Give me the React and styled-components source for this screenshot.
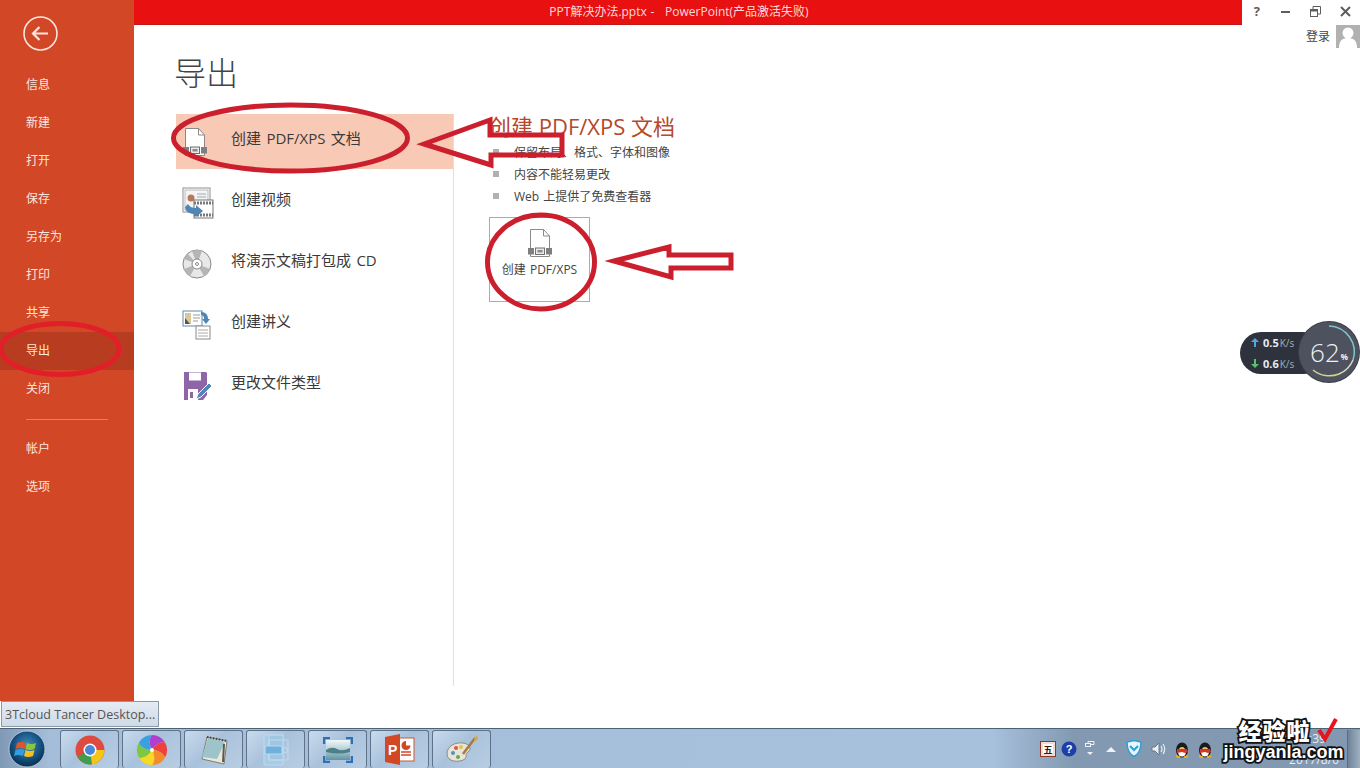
import React from 'react';
import styled, { createGlobalStyle } from 'styled-components';

const Global = createGlobalStyle`
  html, body { margin: 0; padding: 0; background: #fff; }
  body { font-family: "Open Sans", "Noto Sans CJK SC", sans-serif; }
`;

const Page = styled.div`
  position: relative; width: 1360px; height: 768px; overflow: hidden;
  display: flex; flex-direction: column; background: #fff;
`;
const Main = styled.div`flex: 1; display: flex; min-height: 0;`;

const Sidebar = styled.nav`
  width: 134px; height: 701px; flex: none; background: #d24726;
  display: flex; flex-direction: column; color: #fbe6df;
`;
const BackButton = styled.div`height: 66px; padding: 16px 0 0 23px; box-sizing: border-box;`;
const NavItem = styled.div`
  height: 38px; line-height: 38px; padding-left: 26px; font-size: 12px;
  background: ${p => (p.$active ? '#b83d20' : 'transparent')};
`;
const NavDivider = styled.div`height: 1px; width: 82px; margin: 11px 0 10px 26px; background: #ee7a58;`;

const Content = styled.div`flex: 1; display: flex; flex-direction: column; min-width: 0;`;
const TitleRow = styled.div`height: 25px; display: flex;`;
const TitleBar = styled.div`
  flex: 1; background: #e81010; color: #f8dcdc; font-size: 12px;
  line-height: 24px; text-align: center; white-space: pre; word-spacing: 0.5px;
  border-bottom: 1px solid #c01818; box-sizing: border-box; padding-right: 18px;
`;
const WindowControls = styled.div`width: 118px; display: flex; flex: none;`;
const WindowButton = styled.div`
  width: 29.5px; height: 22px; display: flex; align-items: center; justify-content: center;
  color: #5d5d5d; font-size: 13px; font-weight: 700;
`;
const AccountRow = styled.div`height: 23px; display: flex; justify-content: flex-end; align-items: center; gap: 6px;`;
const AccountName = styled.span`font-size: 12px; color: #444; margin-bottom: 2px;`;
const Avatar = styled.div`width: 24px; height: 23px; background: #b1b1b1; overflow: hidden;`;

const PageTitle = styled.h1`
  margin: 4px 0 0 40px; height: 62px; font-size: 32px; line-height: 42px; font-weight: 300; color: #444;
`;
const ExportBody = styled.div`display: flex; margin-left: 42px; height: 572px;`;
const OptionList = styled.div`width: 278px; box-sizing: border-box; border-right: 1px solid #dfdfdf; flex: none;`;
const Option = styled.div`
  height: 55px; margin-bottom: 6px; display: flex; align-items: center; padding-left: 6px;
  width: 277px; box-sizing: border-box;
  background: ${p => (p.$active ? '#f8c9b4' : 'transparent')};
`;
const OptionIcon = styled.div`width: 49px; height: 34px; flex: none; display: flex; align-items: center;`;
const OptionLabel = styled.span`font-size: 15px; color: #3a3a3a; margin-bottom: 9px; word-spacing: 1.5px;`;

const Detail = styled.div`padding-left: 35px; display: flex; flex-direction: column; align-items: flex-start;`;
const DetailTitle = styled.h2`
  margin: -1px 0 2px; font-size: 22px; line-height: 26px; font-weight: 400; color: #b7472a; white-space: nowrap;
`;
const Bullets = styled.ul`list-style: none; margin: 0; padding: 0;`;
const Bullet = styled.li`
  height: 22px; display: flex; align-items: center; font-size: 12px; color: #444; word-spacing: 1px; white-space: pre;
  &::before { content: ""; width: 6px; height: 6px; background: #b1b1b1; margin: 0 15px 0 4px; }
`;
const CreateButton = styled.div`
  width: 101px; height: 85px; margin-top: 10px; box-sizing: border-box; border: 1px solid #ababab;
  display: flex; flex-direction: column; align-items: center; padding-top: 10px; gap: 2px;
  font-size: 12px; color: #444; white-space: nowrap; word-spacing: 1px;
`;

const Tooltip = styled.div`
  position: absolute; left: 1px; top: 701px; width: 158px; height: 26px; box-sizing: border-box;
  border: 1px solid #8e99a6; background: linear-gradient(#e4ebf3, #cfdbe9); color: #555;
  font-size: 12.5px; line-height: 26px; padding-left: 3px; white-space: nowrap;
`;

const Overlay = styled.svg`position: absolute; left: 0; top: 0; pointer-events: none;`;

const Meter = styled.div`position: absolute; left: 1240px; top: 322px; width: 120px; height: 60px;`;
const MeterPill = styled.div`
  position: absolute; left: 0; top: 10px; width: 84px; height: 42px; border-radius: 21px;
  background: #2d323c; color: #e8eaee; font-size: 11px; font-weight: 700;
  display: flex; flex-direction: column; justify-content: center; gap: 5px; padding-left: 11px; box-sizing: border-box;
`;
const Rate = styled.div`display: flex; align-items: center; gap: 4px; line-height: 16px; white-space: nowrap;`;
const Unit = styled.span`font-weight: 400; font-size: 10px; color: #a8adb6; margin-left: -3px;`;
const MeterDial = styled.div`
  position: absolute; left: 59px; top: 0; width: 60px; height: 60px; border-radius: 50%;
  background: #4d525e; color: #f0f1f3; display: flex; align-items: center; justify-content: center;
  font-size: 26px; font-weight: 300; box-shadow: 0 0 0 1px #3c4049;
`;
const Percent = styled.span`font-size: 8px; font-weight: 700; margin: 9px 0 0 1px;`;
const DialRing = styled.svg`position: absolute; inset: 0;`;

const Taskbar = styled.footer`
  height: 40px; flex: none; box-sizing: border-box; border-top: 1px solid #4c6076;
  background: linear-gradient(90deg, #7f99b6 0, #a4bdd9 50px, #a7c0db 73%, #8299b1 79%, #8299b1 100%);
  display: flex; justify-content: space-between; align-items: stretch;
`;
const TaskLeft = styled.div`display: flex; align-items: stretch;`;
const Orb = styled.div`width: 60px; display: flex; align-items: center; padding-left: 8px; box-sizing: border-box;`;
const TaskButton = styled.div`
  width: 59px; margin-right: 3px; box-sizing: border-box; border: 1px solid #5e738a; border-radius: 3px;
  border-bottom-width: 0; margin-top: 1px; display: flex; align-items: center; justify-content: center;
  background: linear-gradient(135deg, #c9dbed 0, #a9c2dc 45%, #b8cde2 100%);
`;
const TaskRight = styled.div`display: flex; align-items: stretch;`;
const TrayCell = styled.div`
  width: ${p => p.$w}px; display: flex; align-items: center; justify-content: center;
`;
const Clock = styled.div`
  width: 131px; box-sizing: border-box; padding-left: 65px; display: flex; flex-direction: column;
  align-items: center; justify-content: space-between; color: #e8eef4; font-size: 12px; line-height: 16px; padding-top: 2px;
`;
const ShowDesktop = styled.div`
  width: 13px; margin-top: 1px; background: linear-gradient(90deg, #6f8398, #9fb0c2); border-left: 1px solid #5a6c80; box-sizing: border-box;
`;

const Watermark = styled.div`
  position: absolute; left: 1220px; top: 716px; width: 127px; text-align: center; color: #fff; font-weight: 700;
  -webkit-text-stroke: 3.5px #111; paint-order: stroke fill;
`;
const WatermarkCn = styled.div`font-size: 23px; line-height: 29px; letter-spacing: 1px; margin-right: 18px; font-family: "Noto Sans CJK SC", sans-serif; font-weight: 900;`;
const WatermarkEn = styled.div`font-size: 18px; line-height: 15px; font-family: "Liberation Sans", sans-serif;`;

const DocIcon = () => (
  <svg width="26" height="30" viewBox="0 0 26 30">
    <path d="M3.500 28.500V1.500h13l6 6.500v20.500H3.500z" fill="#fff" stroke="#8a8a8a" />
    <path d="M16.500 1.500V8h6" fill="none" stroke="#8a8a8a" />
    <rect x="1" y="20" width="6" height="6.500" fill="#7f7f7f" />
    <rect x="19" y="20" width="6" height="6.500" fill="#7f7f7f" />
    <rect x="8.500" y="20" width="9" height="6.500" fill="#e9e9e9" stroke="#6f6f6f" />
    <rect x="10.500" y="22" width="5" height="2.500" fill="#8a8a8a" />
  </svg>
);
const VideoIcon = () => (
  <svg width="32" height="32" viewBox="0 0 32 32">
    <rect x="1" y="1" width="27" height="24" fill="#fff" stroke="#8f8f8f" />
    <rect x="3" y="3" width="23" height="20" fill="#f4f4f4" stroke="#bbb" />
    <circle cx="9" cy="11" r="3.500" fill="#b5785c" />
    <path d="M15 7h9M15 10h9" stroke="#9ab" />
    <rect x="12" y="13" width="19" height="18" fill="#fff" stroke="#777" />
    <path d="M12 16h19M12 28h19" stroke="#777" strokeWidth="3" strokeDasharray="2 1" />
    <path d="M3 20c1 6 5 7 11 7v3l7-6-7-6v3c-4 0-6-1-8-4z" fill="#4f86b5" />
  </svg>
);
const DiscIcon = () => (
  <svg width="30" height="30" viewBox="0 0 30 30">
    <circle cx="15" cy="15" r="14" fill="#e8e8e8" stroke="#8a8a8a" />
    <path d="M15 15L10 2a14 14 0 0 1 10 0zM15 15L28 20a14 14 0 0 1-6 7zM15 15L2 20a14 14 0 0 0 6 7zM15 15L2 10a14 14 0 0 1 4-5z" fill="#b5b5b5" />
    <circle cx="15" cy="15" r="5" fill="#fff" stroke="#8a8a8a" />
    <circle cx="15" cy="15" r="1.500" fill="#fff" stroke="#8a8a8a" />
  </svg>
);
const HandoutIcon = () => (
  <svg width="30" height="30" viewBox="0 0 30 30">
    <rect x="1" y="1" width="19" height="15" fill="#fff" stroke="#5f88ab" />
    <path d="M3 3h6v11H3z" fill="#d9c79a" />
    <path d="M3 14L3 8l5 6z" fill="#555" />
    <path d="M11 5h7M11 8h7M11 11h5" stroke="#999" />
    <rect x="14" y="16" width="14" height="13" fill="#fff" stroke="#8a8a8a" />
    <path d="M16 20h10M16 23h10M16 26h10" stroke="#aaa" />
    <path d="M19 2c5 0 7 3 7 7h2l-4 5-4-5h2c0-3-1-4-3-4z" fill="#4f86b5" />
  </svg>
);
const SaveIcon = () => (
  <svg width="30" height="30" viewBox="0 0 30 30">
    <path d="M2 1h22l1 1v22l-4 5H2z" fill="#8e65a6" />
    <rect x="7" y="1.500" width="12" height="8" fill="#fff" />
    <rect x="6" y="18" width="10" height="11" fill="#fff" />
    <rect x="8" y="21" width="3" height="6" fill="#8e65a6" />
    <path d="M14 28l2-5 11-11 3 3-11 11z" fill="#4f86b5" stroke="#fff" />
  </svg>
);
const BackIcon = () => (
  <svg width="35" height="35" viewBox="0 0 35 35" fill="none" stroke="#fbe6df" strokeWidth="1.600">
    <circle cx="17.500" cy="17.500" r="16.500" />
    <path d="M10 17.500h15M16.500 11l-6.500 6.500 6.500 6.500" strokeWidth="2.200" />
  </svg>
);
const WinFlag = () => (
  <svg width="38" height="38" viewBox="0 0 38 38">
    <defs>
      <radialGradient id="orb" cx="50%" cy="40%" r="60%">
        <stop offset="0" stopColor="#3f8fc0" /><stop offset="0.7" stopColor="#124a78" /><stop offset="1" stopColor="#0b2c4c" />
      </radialGradient>
    </defs>
    <circle cx="19" cy="19" r="18" fill="url(#orb)" stroke="#c8d8e8" strokeWidth="0.800" />
    <path d="M9 13q4-2 9 0l-1.500 6q-4-2-9 0z" fill="#e0542c" />
    <path d="M19 13q4 2 9 0l-1.500 6q-5 2-9 0z" fill="#8cc63f" />
    <path d="M7.500 20q4-2 9 0l-1.500 6q-5-2-9 0z" fill="#2f9fe0" />
    <path d="M17.500 20q4 2 9 0l-1.500 6q-5 2-9 0z" fill="#f4c020" />
  </svg>
);
const ChromeIcon = () => (
  <svg width="30" height="30" viewBox="0 0 30 30">
    <circle cx="15" cy="15" r="14.500" fill="#dd4b3e" />
    <path d="M15 15L2.500 22A14.500 14.500 0 0 0 17 29.400z" fill="#3f9e4d" />
    <path d="M15 15h14.400A14.500 14.500 0 0 1 17 29.400z" fill="#f5c518" />
    <circle cx="15" cy="15" r="6.500" fill="#fff" />
    <circle cx="15" cy="15" r="5" fill="#4a87d8" />
  </svg>
);
const PinwheelIcon = () => {
  const colors = ['#b03fd0', '#f0403a', '#f58a2a', '#f8d820', '#7dc840', '#3aa0e0'];
  return (
    <svg width="32" height="32" viewBox="0 0 32 32">
      {colors.map((c, i) => (
        <path key={c} d="M16 16C13 11 13 4 16 1A15 15 0 0 1 29 8.500C24.890 7.400 18.830 10.900 16 16z" fill={c} transform={`rotate(${i * 60} 16 16)`} />
      ))}
      <circle cx="16" cy="16" r="2" fill="#fff" />
    </svg>
  );
};
const NotepadIcon = () => (
  <svg width="32" height="32" viewBox="0 0 32 32">
    <path d="M9 3l20 4-3 23-22-5z" fill="#e8e8dc" stroke="#7d7d70" />
    <path d="M10 4l17 4-8 17-15-2z" fill="#9cc4ca" />
    <path d="M9 3l20 4" stroke="#444" strokeWidth="2" strokeDasharray="1.500 1.500" />
    <path d="M26 10l-1 18" stroke="#5a5a50" strokeWidth="2" />
  </svg>
);
const WindowsAppIcon = () => (
  <svg width="32" height="32" viewBox="0 0 32 32" fill="none" stroke="#bcd9ee" strokeWidth="1.200">
    <rect x="4" y="1" width="19" height="30" rx="2" fill="#a8cbe6" />
    <rect x="9" y="1" width="14" height="25" fill="#a0c6e4" />
    <rect x="9" y="6" width="19" height="20" rx="1" />
    <rect x="5" y="12" width="17" height="8" rx="1" fill="#6fb1dc" />
    <circle cx="25" cy="16" r="2.500" />
  </svg>
);
const PictureIcon = () => (
  <svg width="30" height="26" viewBox="0 0 30 26">
    <defs>
      <linearGradient id="sea" x1="0" x2="0" y1="0" y2="1">
        <stop offset="0" stopColor="#f2f7f9" /><stop offset="0.45" stopColor="#b7d2d8" /><stop offset="1" stopColor="#5f93a0" />
      </linearGradient>
    </defs>
    <rect x="3" y="3" width="24" height="20" fill="url(#sea)" />
    <path d="M3 13q6-4 11-1t13-1v4q-12 3-24 0z" fill="#4d7f86" />
    <path d="M1 7V1h6M23 1h6v6M29 19v6h-6M7 25H1v-6" fill="none" stroke="#2f6fb5" strokeWidth="2.500" />
  </svg>
);
const PptIcon = () => (
  <svg width="31" height="31" viewBox="0 0 31 31">
    <rect x="13" y="4" width="17" height="23" fill="#fff" stroke="#c65a36" />
    <path d="M22 7a4.500 4.500 0 1 0 4.500 4.500H22z" fill="#d24726" />
    <path d="M17 18h10M17 21h10" stroke="#d24726" strokeWidth="1.500" />
    <path d="M1 3l15-3v31L1 28z" fill="#d24726" />
    <text x="4" y="21" fill="#fff" fontSize="14" fontWeight="700" fontFamily="Liberation Sans, sans-serif">P</text>
  </svg>
);
const PaletteIcon = () => (
  <svg width="34" height="32" viewBox="0 0 34 32">
    <path d="M2 20c0-8 8-12 16-11 7 1 9 6 5 9-3 2-1 5-3 7-6 4-18 3-18-5z" fill="#e7e4d8" stroke="#8d8a7c" />
    <circle cx="8" cy="19" r="2" fill="#5a8ec0" /><circle cx="11" cy="14" r="2" fill="#d9584a" />
    <circle cx="16" cy="13" r="2" fill="#e6c440" /><circle cx="13" cy="23" r="2" fill="#6aa84f" />
    <path d="M18 20L30 4" stroke="#a87a42" strokeWidth="2.500" />
    <path d="M29 5l3-4 1 4-3 3z" fill="#d9a54a" />
  </svg>
);

const Penguin = () => (
  <svg width="16" height="18" viewBox="0 0 16 18">
    <ellipse cx="8" cy="10" rx="6" ry="7.500" fill="#1a1a1a" />
    <ellipse cx="8" cy="12" rx="4" ry="4.500" fill="#fff" />
    <path d="M3 9h10l1 3-3 1-3-1-5 1z" fill="#d8342a" />
    <ellipse cx="8" cy="8" rx="2" ry="1" fill="#f0b020" />
    <path d="M2 16l4 1.500M14 16l-4 1.500" stroke="#f0b020" strokeWidth="2" />
  </svg>
);

const NAV_TOP = ['信息', '新建', '打开', '保存', '另存为', '打印', '共享', '导出', '关闭'];
const NAV_BOTTOM = ['帐户', '选项'];

const OPTIONS = [
  { label: '创建 PDF/XPS 文档', icon: <DocIcon />, active: true },
  { label: '创建视频', icon: <VideoIcon /> },
  { label: '将演示文稿打包成 CD', icon: <DiscIcon /> },
  { label: '创建讲义', icon: <HandoutIcon /> },
  { label: '更改文件类型', icon: <SaveIcon /> },
];
const BULLETS = ['保留布局、格式、字体和图像', '内容不能轻易更改', 'Web 上提供了免费查看器'];
const APPS = [<ChromeIcon key="c" />, <PinwheelIcon key="p" />, <NotepadIcon key="n" />, <WindowsAppIcon key="w" />, <PictureIcon key="i" />, <PptIcon key="t" />, <PaletteIcon key="e" />];

export default function App() {
  return (
    <Page>
      <Global />
      <Main>
        <Sidebar>
          <BackButton><BackIcon /></BackButton>
          {NAV_TOP.map(n => <NavItem key={n} $active={n === '导出'}>{n}</NavItem>)}
          <NavDivider />
          {NAV_BOTTOM.map(n => <NavItem key={n}>{n}</NavItem>)}
        </Sidebar>
        <Content>
          <TitleRow>
            <TitleBar>{'PPT解决办法.pptx -   PowerPoint(产品激活失败)'}</TitleBar>
            <WindowControls>
              <WindowButton>?</WindowButton>
              <WindowButton><svg width="10" height="10"><path d="M0 6h9" stroke="#5d5d5d" strokeWidth="2" /></svg></WindowButton>
              <WindowButton>
                <svg width="11" height="11" fill="none" stroke="#5d5d5d"><rect x="0.500" y="3.500" width="7" height="7" /><path d="M3 3V.500h7.500V8H8" /><path d="M0 4.500h8" strokeWidth="2" /></svg>
              </WindowButton>
              <WindowButton><svg width="11" height="11"><path d="M1 1l9 9M10 1l-9 9" stroke="#5d5d5d" strokeWidth="2" /></svg></WindowButton>
            </WindowControls>
          </TitleRow>
          <AccountRow>
            <AccountName>登录</AccountName>
            <Avatar>
              <svg width="24" height="23" viewBox="0 0 24 23">
                <circle cx="12" cy="8" r="5.500" fill="#fff" />
                <path d="M3 23c0-8 4-10 9-10s9 2 9 10z" fill="#fff" />
              </svg>
            </Avatar>
          </AccountRow>
          <PageTitle>导出</PageTitle>
          <ExportBody>
            <OptionList>
              {OPTIONS.map(o => (
                <Option key={o.label} $active={o.active}>
                  <OptionIcon>{o.icon}</OptionIcon>
                  <OptionLabel>{o.label}</OptionLabel>
                </Option>
              ))}
            </OptionList>
            <Detail>
              <DetailTitle>创建 PDF/XPS 文档</DetailTitle>
              <Bullets>
                {BULLETS.map(b => <Bullet key={b}>{b}</Bullet>)}
              </Bullets>
              <CreateButton>
                <DocIcon />
                创建 PDF/XPS
              </CreateButton>
            </Detail>
          </ExportBody>
        </Content>
      </Main>
      <Taskbar>
        <TaskLeft>
          <Orb><WinFlag /></Orb>
          {APPS.map((a, i) => <TaskButton key={i}>{a}</TaskButton>)}
        </TaskLeft>
        <TaskRight>
          <TrayCell $w={21}>
            <svg width="16" height="16"><rect x="0.500" y="0.500" width="15" height="15" fill="#f2dcd2" stroke="#8a3a30" /><rect x="3" y="3" width="10" height="10" fill="#fff" /><text x="8" y="12" textAnchor="middle" fontSize="9" fontWeight="700" fill="#222" fontFamily="Noto Sans CJK SC">五</text></svg>
          </TrayCell>
          <TrayCell $w={22}>
            <svg width="16" height="16"><circle cx="8" cy="8" r="7.500" fill="#1f3fa8" /><text x="8" y="12" textAnchor="middle" fontSize="11" fontWeight="700" fill="#fff" fontFamily="Liberation Sans">?</text></svg>
          </TrayCell>
          <TrayCell $w={20}>
            <svg width="10" height="16" fill="none" stroke="#eef2f6"><rect x="0.500" y="2.500" width="5" height="3" /><path d="M3 2V.500h6v3H6" /><path d="M2 11h6l-3 3z" fill="#eef2f6" stroke="none" /></svg>
          </TrayCell>
          <TrayCell $w={21}><svg width="10" height="6"><path d="M0 6l5-5 5 5z" fill="#f0f3f6" /></svg></TrayCell>
          <TrayCell $w={25}>
            <svg width="16" height="17" viewBox="0 0 16 17"><path d="M1 2l7-1.500L15 2c0 7-2 12-7 14.500C3 14 1 9 1 2z" fill="#e8f6fc" stroke="#2a9fd8" strokeWidth="1.500" /><path d="M4 6l4 4 4-4" fill="none" stroke="#2a9fd8" strokeWidth="2" /></svg>
          </TrayCell>
          <TrayCell $w={24}>
            <svg width="15" height="14" fill="none"><path d="M1 5h3l4-4v12L4 9H1z" fill="#e8eef2" stroke="#6b7885" /><path d="M10 4q2 3 0 6M12 2q3.500 5 0 10" stroke="#e8eef2" strokeWidth="1.200" /></svg>
          </TrayCell>
          <TrayCell $w={23}><Penguin /></TrayCell>
          <TrayCell $w={23}><Penguin /></TrayCell>
          <Clock>
            <span>9:39</span>
            <span>2017/8/6</span>
          </Clock>
          <ShowDesktop />
        </TaskRight>
      </Taskbar>

      <Tooltip>3Tcloud Tancer Desktop...</Tooltip>

      <Meter>
        <MeterPill>
          <Rate>
            <svg width="8" height="9"><path d="M4 0l4 4H5v5H3V4H0z" fill="#4fa8d8" /></svg>
            0.5<Unit>K/s</Unit>
          </Rate>
          <Rate>
            <svg width="8" height="9"><path d="M4 9L0 5h3V0h2v5h3z" fill="#5cc06a" /></svg>
            0.6<Unit>K/s</Unit>
          </Rate>
        </MeterPill>
        <MeterDial>
          62<Percent>%</Percent>
          <DialRing width="60" height="60" viewBox="0 0 60 60" fill="none" strokeWidth="1.500">
            <path d="M30 4a26 26 0 0 1 24 34" stroke="#7fc4c8" />
            <path d="M54 38a26 26 0 0 1-14 14" stroke="#d8d8c0" />
            <path d="M40 52a26 26 0 0 1-26-4" stroke="#d6d48a" />
          </DialRing>
        </MeterDial>
      </Meter>

      <Overlay width="1360" height="768" viewBox="0 0 1360 768" fill="none">
        <ellipse cx="290.500" cy="138" rx="117" ry="33" stroke="#cc1f2d" strokeWidth="5" />
        <ellipse cx="60" cy="349" rx="59" ry="25.500" stroke="#e21e28" strokeWidth="5" />
        <ellipse cx="541" cy="262" rx="53.500" ry="47" stroke="#cc1f2d" strokeWidth="5" />
        <path d="M424 144L490 120V135H562V155H491V165Z" stroke="#cc1f2d" strokeWidth="5" />
        <path d="M614 261L669 247V255H731V268H671V277Z" stroke="#cc1f2d" strokeWidth="5" />
      </Overlay>

      <Watermark>
        <WatermarkCn>经验啦</WatermarkCn>
        <WatermarkEn>jingyanla.com</WatermarkEn>
      </Watermark>
      <Overlay width="1360" height="768" viewBox="0 0 1360 768" fill="none">
        <path d="M1319 730l6 9 11-20" stroke="#e8141c" strokeWidth="4" />
      </Overlay>
    </Page>
  );
}
